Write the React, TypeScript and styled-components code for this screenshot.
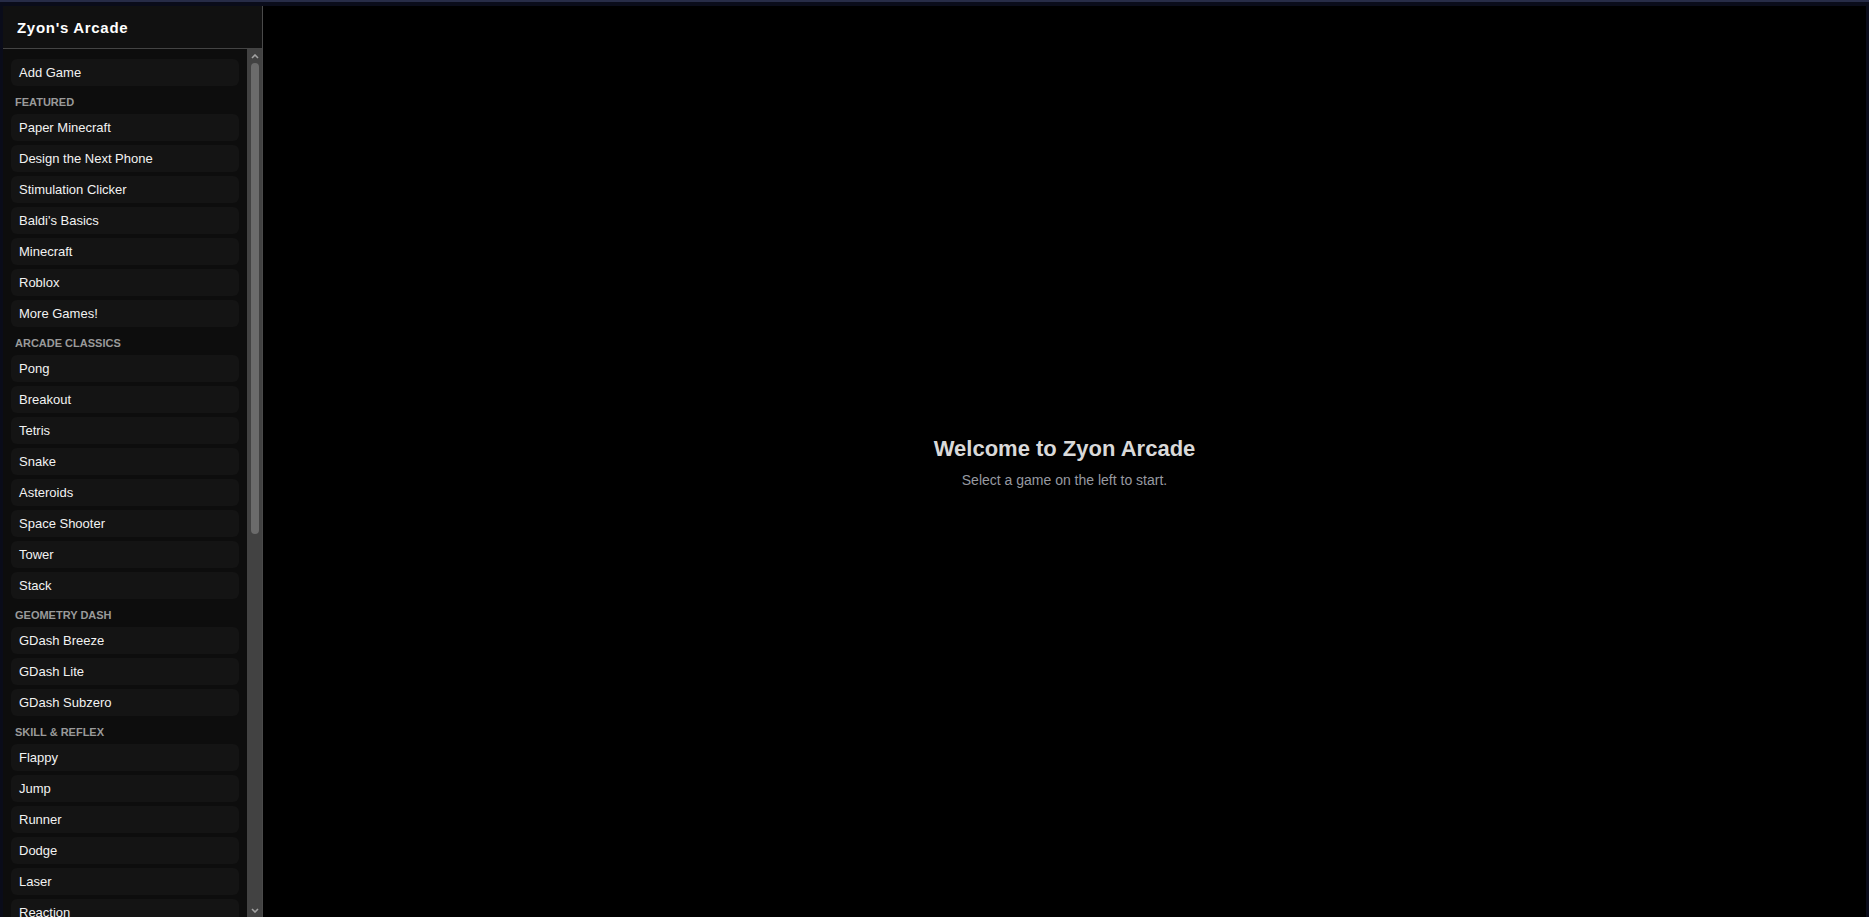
import React from 'react';
import styled, { createGlobalStyle } from 'styled-components';

const GlobalStyle = createGlobalStyle`
  html, body {
    margin: 0;
    padding: 0;
    height: 100%;
    overflow: hidden;
  }

  body {
    background: linear-gradient(#272c47 0 2px, #0a0c1a 2px);
    font-family: 'Liberation Sans', Arial, sans-serif;
  }

  #root {
    height: 100%;
  }
`;

const Shell = styled.div`
  display: flex;
  height: calc(100vh - 6px);
  margin: 6px 3px 0 3px;
  background: #000000;
`;

const Sidebar = styled.aside`
  width: 259px;
  flex-shrink: 0;
  display: flex;
  flex-direction: column;
  background: #0d0d0d;
  border-right: 1px solid #4a4a4a;
  min-height: 0;
`;

const SidebarHeader = styled.div`
  height: 42px;
  display: flex;
  align-items: center;
  padding-left: 14px;
  background: #111111;
  border-bottom: 1px solid #444444;
  flex-shrink: 0;
`;

const Brand = styled.h1`
  margin: 0;
  font-size: 15px;
  font-weight: 700;
  letter-spacing: 0.7px;
  color: #ffffff;
`;

const ListArea = styled.div`
  flex: 1;
  min-height: 0;
  display: flex;
`;

const GameList = styled.nav`
  flex: 1;
  min-width: 0;
  overflow: hidden;
  display: flex;
  flex-direction: column;
  gap: 4px;
  padding: 10px 8px;
`;

const ScrollTrack = styled.div`
  width: 15px;
  flex-shrink: 0;
  display: flex;
  flex-direction: column;
  align-items: center;
  background: #424242;
`;

const ScrollArrow = styled.div`
  height: 14px;
  width: 100%;
  display: flex;
  align-items: center;
  justify-content: center;
  flex-shrink: 0;
`;

const ScrollThumb = styled.div`
  width: 8px;
  height: 471px;
  border-radius: 4px;
  background: #6b6b6b;
`;

const ScrollSpacer = styled.div`
  flex: 1;
`;

const GameButton = styled.button`
  display: block;
  width: 100%;
  height: 27px;
  flex-shrink: 0;
  padding: 0 8px;
  border: none;
  border-radius: 6px;
  background: #141414;
  color: #f2f2f2;
  font-family: 'Liberation Sans', Arial, sans-serif;
  font-size: 13px;
  text-align: left;
  cursor: pointer;

  &:hover {
    background: #222222;
  }
`;

const SectionLabel = styled.div`
  margin: 6px 0 1px;
  padding-left: 4px;
  height: 13px;
  line-height: 13px;
  flex-shrink: 0;
  font-size: 11px;
  font-weight: 700;
  color: #9a9a9a;
  text-transform: uppercase;
`;

const Stage = styled.main`
  flex: 1;
  display: flex;
  flex-direction: column;
  align-items: center;
  justify-content: center;
  background: #000000;
  text-align: center;
`;

const WelcomeTitle = styled.h2`
  margin: 0 0 10px;
  font-size: 22px;
  font-weight: 700;
  color: #d9d9d9;
`;

const WelcomeText = styled.p`
  margin: 0;
  font-size: 14px;
  color: #979aa0;
`;

const sections = [
  {
    title: 'Featured',
    games: [
      'Paper Minecraft',
      'Design the Next Phone',
      'Stimulation Clicker',
      "Baldi's Basics",
      'Minecraft',
      'Roblox',
      'More Games!',
    ],
  },
  {
    title: 'Arcade Classics',
    games: ['Pong', 'Breakout', 'Tetris', 'Snake', 'Asteroids', 'Space Shooter', 'Tower', 'Stack'],
  },
  {
    title: 'Geometry Dash',
    games: ['GDash Breeze', 'GDash Lite', 'GDash Subzero'],
  },
  {
    title: 'Skill & Reflex',
    games: ['Flappy', 'Jump', 'Runner', 'Dodge', 'Laser', 'Reaction', 'Aim Trainer', 'Catch'],
  },
  {
    title: 'Puzzle',
    games: ['2048', 'Minesweeper', 'Sudoku', 'Memory', 'Simon', 'Sliding Puzzle', 'Connect Four'],
  },
  {
    title: 'Other',
    games: ['Tic Tac Toe', 'Typing Test', 'Whack-a-Mole', 'Maze'],
  },
];

const Chevron: React.FC<{ down?: boolean }> = ({ down }) => (
  <svg width="8" height="5" viewBox="0 0 8 5">
    <polyline
      points={down ? '1,1 4,4 7,1' : '1,4 4,1 7,4'}
      fill="none"
      stroke="#a3a3a3"
      strokeWidth="1.6"
    />
  </svg>
);

const App: React.FC = () => {
  return (
    <>
      <GlobalStyle />
      <Shell>
        <Sidebar>
          <SidebarHeader>
            <Brand>Zyon's Arcade</Brand>
          </SidebarHeader>
          <ListArea>
            <GameList>
              <GameButton>Add Game</GameButton>
              {sections.map((section) => (
                <React.Fragment key={section.title}>
                  <SectionLabel>{section.title}</SectionLabel>
                  {section.games.map((game) => (
                    <GameButton key={game}>{game}</GameButton>
                  ))}
                </React.Fragment>
              ))}
            </GameList>
            <ScrollTrack>
              <ScrollArrow>
                <Chevron />
              </ScrollArrow>
              <ScrollThumb />
              <ScrollSpacer />
              <ScrollArrow>
                <Chevron down />
              </ScrollArrow>
            </ScrollTrack>
          </ListArea>
        </Sidebar>
        <Stage>
          <WelcomeTitle>Welcome to Zyon Arcade</WelcomeTitle>
          <WelcomeText>Select a game on the left to start.</WelcomeText>
        </Stage>
      </Shell>
    </>
  );
};

export default App;
